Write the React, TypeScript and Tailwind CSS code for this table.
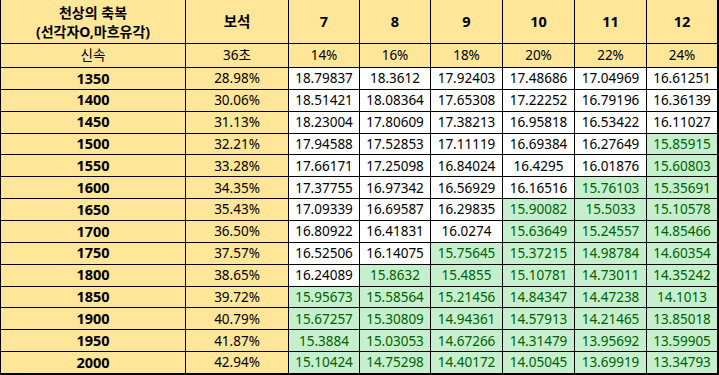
import React from "react";

const rows: [string, string, number[]][] = [
  ["1350", "28.98%", [18.79837, 18.3612, 17.92403, 17.48686, 17.04969, 16.61251]],
  ["1400", "30.06%", [18.51421, 18.08364, 17.65308, 17.22252, 16.79196, 16.36139]],
  ["1450", "31.13%", [18.23004, 17.80609, 17.38213, 16.95818, 16.53422, 16.11027]],
  ["1500", "32.21%", [17.94588, 17.52853, 17.11119, 16.69384, 16.27649, 15.85915]],
  ["1550", "33.28%", [17.66171, 17.25098, 16.84024, 16.4295, 16.01876, 15.60803]],
  ["1600", "34.35%", [17.37755, 16.97342, 16.56929, 16.16516, 15.76103, 15.35691]],
  ["1650", "35.43%", [17.09339, 16.69587, 16.29835, 15.90082, 15.5033, 15.10578]],
  ["1700", "36.50%", [16.80922, 16.41831, 16.0274, 15.63649, 15.24557, 14.85466]],
  ["1750", "37.57%", [16.52506, 16.14075, 15.75645, 15.37215, 14.98784, 14.60354]],
  ["1800", "38.65%", [16.24089, 15.8632, 15.4855, 15.10781, 14.73011, 14.35242]],
  ["1850", "39.72%", [15.95673, 15.58564, 15.21456, 14.84347, 14.47238, 14.1013]],
  ["1900", "40.79%", [15.67257, 15.30809, 14.94361, 14.57913, 14.21465, 13.85018]],
  ["1950", "41.87%", [15.3884, 15.03053, 14.67266, 14.31479, 13.95692, 13.59905]],
  ["2000", "42.94%", [15.10424, 14.75298, 14.40172, 14.05045, 13.69919, 13.34793]],
];

const levels = ["7", "8", "9", "10", "11", "12"];
const pcts = ["14%", "16%", "18%", "20%", "22%", "24%"];

const yellow = "bg-[#FFE699] flex items-center justify-center text-black";

export default function App() {
  return (
    <div
      className="w-[719px] h-[375px] bg-white"
      style={{ fontFamily: '"Noto Sans", "Noto Sans CJK KR", sans-serif' }}
    >
      <div className="w-[719px] h-[375px] grid grid-cols-[184px_102px_70px_70px_71px_71px_71px_70px] grid-rows-[43px_23px_repeat(14,minmax(0,1fr))] gap-px bg-black border-l border-r-2 border-b-2 border-black">
        <div className={`${yellow} flex-col font-bold text-[14px] leading-[19px]`}>
          <span>천상의 축복</span>
          <span>(선각자O,마흐유각)</span>
        </div>
        <div className={`${yellow} font-bold text-[14.5px]`}>보석</div>
        {levels.map((l) => (
          <div key={l} className={`${yellow} font-bold text-[14.5px]`}>
            {l}
          </div>
        ))}
        <div className={`${yellow} text-[13.5px]`}>신속</div>
        <div className={`${yellow} text-[13.5px]`}>36초</div>
        {pcts.map((p) => (
          <div key={p} className={`${yellow} text-[13.5px]`}>
            {p}
          </div>
        ))}
        {rows.map(([speed, gem, vals]) => (
          <React.Fragment key={speed}>
            <div className={`${yellow} font-bold text-[14.5px]`}>{speed}</div>
            <div className={`${yellow} text-[13.5px]`}>{gem}</div>
            {vals.map((v, i) =>
              v < 16 ? (
                <div
                  key={i}
                  className="bg-[#C6EFCE] text-[#006100] flex items-center justify-center text-[13.5px]"
                >
                  {String(v)}
                </div>
              ) : (
                <div
                  key={i}
                  className="bg-white text-black flex items-center justify-center text-[13.5px]"
                >
                  {String(v)}
                </div>
              )
            )}
          </React.Fragment>
        ))}
      </div>
    </div>
  );
}
